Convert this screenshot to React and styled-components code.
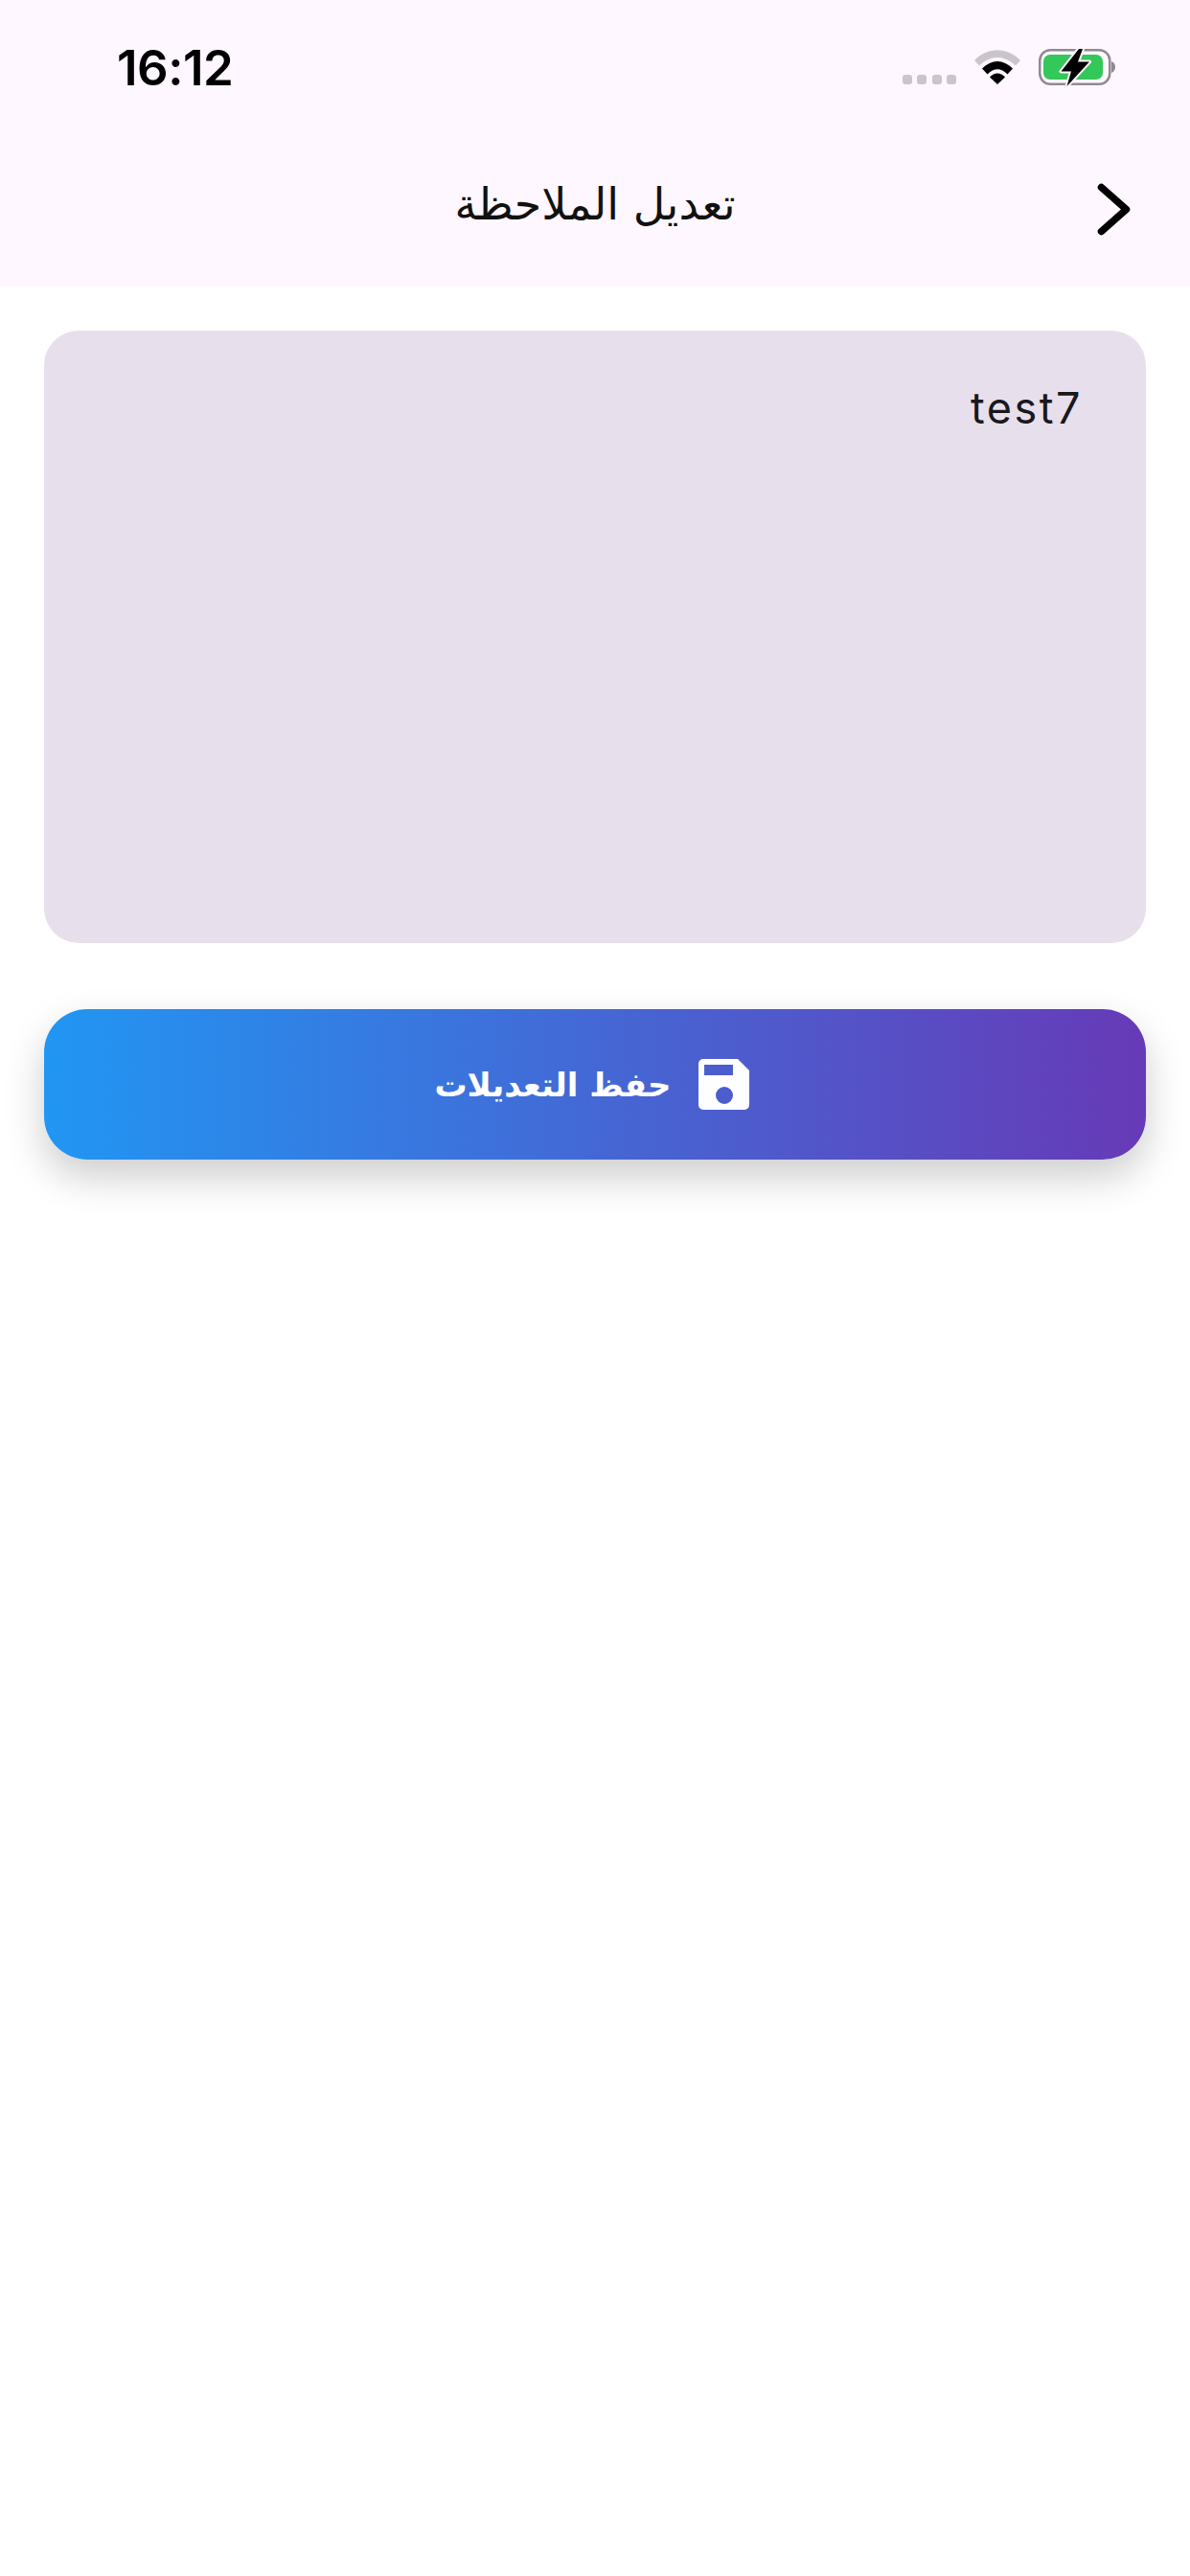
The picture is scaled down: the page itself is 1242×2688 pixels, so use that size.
import styled, { createGlobalStyle } from 'styled-components'

const GlobalStyle = createGlobalStyle`
  html, body {
    margin: 0;
    padding: 0;
    background: #fff;
  }
`

const Page = styled.div`
  width: 1242px;
  height: 2688px;
  background: #fff;
  overflow: hidden;
  font-family: 'Inter', 'Liberation Sans', sans-serif;
`

const Header = styled.header`
  height: 299px;
  background: #fff7ff;
  box-sizing: border-box;
  display: flex;
  flex-direction: column;
`

const StatusBar = styled.div`
  height: 132px;
  box-sizing: border-box;
  padding: 42px 78px 0 122px;
  display: flex;
  justify-content: space-between;
  align-items: flex-start;
`

const Clock = styled.span`
  font-size: 51px;
  font-weight: 600;
  line-height: 58px;
  color: #000;
  letter-spacing: -0.5px;
`

const StatusIcons = styled.div`
  display: flex;
  align-items: flex-start;
  padding-top: 8px;
`

const Dots = styled.div`
  display: flex;
  gap: 5.5px;
  margin-top: 28px;
  margin-right: 19px;
`

const Dot = styled.i`
  width: 10px;
  height: 10px;
  border-radius: 3px;
  background: #c9c5ca;
`

const NavBar = styled.div`
  flex: 1;
  display: grid;
  grid-template-columns: 1fr auto 1fr;
  align-items: center;
  padding: 0 62px;
`

const Title = styled.h1`
  grid-column: 2;
  margin: 0 0 6px;
  font-family: 'DejaVu Sans', sans-serif;
  font-size: 46px;
  font-weight: 400;
  color: #111;
  direction: rtl;
`

const BackButton = styled.div`
  grid-column: 3;
  justify-self: end;
  display: flex;
  margin-top: 6px;
`

const Content = styled.main`
  padding: 46px 46px 0;
  display: flex;
  flex-direction: column;
  gap: 69px;
`

const NoteCard = styled.div`
  height: 639px;
  box-sizing: border-box;
  background: #e7e0ec;
  border-radius: 36px;
  padding: 51px 66px 0;
  text-align: right;
  font-size: 45px;
  line-height: 60px;
  letter-spacing: 2.5px;
  color: #1a181d;
`

const SaveButton = styled.button`
  height: 157px;
  width: 100%;
  border: 0;
  border-radius: 45px;
  background: linear-gradient(90deg, #2196f3, #673ab7);
  box-shadow: 0 18px 42px rgba(0, 0, 0, 0.2);
  display: flex;
  align-items: center;
  justify-content: center;
  gap: 28px;
  color: #fff;
  padding: 0 7px 0 0;
`

const SaveLabel = styled.span`
  font-family: 'DejaVu Sans', sans-serif;
  font-size: 34px;
  font-weight: 700;
  direction: rtl;
`

function WifiIcon() {
  return (
    <svg width="48" height="36" viewBox="0 0 48 36" style={{ marginTop: 2 }}>
      <path d="M0 11 C14 -3.5 34 -3.5 48 11 L43 16.5 C31 5 17 5 5 16.5 Z" fill="#c9c5ca" />
      <path d="M8 19.5 C18 9.5 30 9.5 40 19.5 L34.5 25.5 C27.5 18.5 20.5 18.5 13.5 25.5 Z" fill="#000" />
      <path d="M16 28.5 C21 23 27 23 32 28.5 L24 36 Z" fill="#000" />
    </svg>
  )
}

function BatteryIcon() {
  return (
    <svg width="81" height="42" viewBox="0 0 81 42" style={{ marginLeft: 18 }}>
      <rect x="2.25" y="2.25" width="73" height="35.5" rx="11" fill="none" stroke="#8e8c90" strokeWidth="2.5" />
      <rect x="6" y="7" width="62" height="26" rx="7" fill="#34c759" />
      <path d="M77 14 C80 15 81 17.5 81 20 C81 22.5 80 25 77 26 Z" fill="#8e8c90" />
      <path
        d="M43 1 L24.5 24.5 L35 24.5 L30.5 40 L54 14.5 L42 14.5 L47 1 Z"
        fill="#000"
        stroke="#fff7ff"
        strokeWidth="4"
        strokeLinejoin="round"
        paintOrder="stroke"
      />
    </svg>
  )
}

function ChevronIcon() {
  return (
    <svg width="35" height="55" viewBox="0 0 35 55" fill="none">
      <path d="M4.5 4.5 L30.5 27.5 L4.5 50.5" stroke="#000" strokeWidth="7.5" strokeLinecap="round" strokeLinejoin="round" />
    </svg>
  )
}

function SaveIcon() {
  return (
    <svg width="53" height="53" viewBox="0 0 53 53">
      <path
        fillRule="evenodd"
        fill="#fff"
        d="M5 0 H41 L53 12 V48 A5 5 0 0 1 48 53 H5 A5 5 0 0 1 0 48 V5 A5 5 0 0 1 5 0 Z M6 6 V17 H36 V6 Z M27 29 A9 9 0 1 0 27 47 A9 9 0 1 0 27 29 Z"
      />
    </svg>
  )
}

export default function App() {
  return (
    <Page>
      <GlobalStyle />
      <Header>
        <StatusBar>
          <Clock>16:12</Clock>
          <StatusIcons>
            <Dots>
              <Dot />
              <Dot />
              <Dot />
              <Dot />
            </Dots>
            <WifiIcon />
            <BatteryIcon />
          </StatusIcons>
        </StatusBar>
        <NavBar>
          <Title>تعديل الملاحظة</Title>
          <BackButton>
            <ChevronIcon />
          </BackButton>
        </NavBar>
      </Header>
      <Content>
        <NoteCard>test7</NoteCard>
        <SaveButton>
          <SaveLabel>حفظ التعديلات</SaveLabel>
          <SaveIcon />
        </SaveButton>
      </Content>
    </Page>
  )
}
